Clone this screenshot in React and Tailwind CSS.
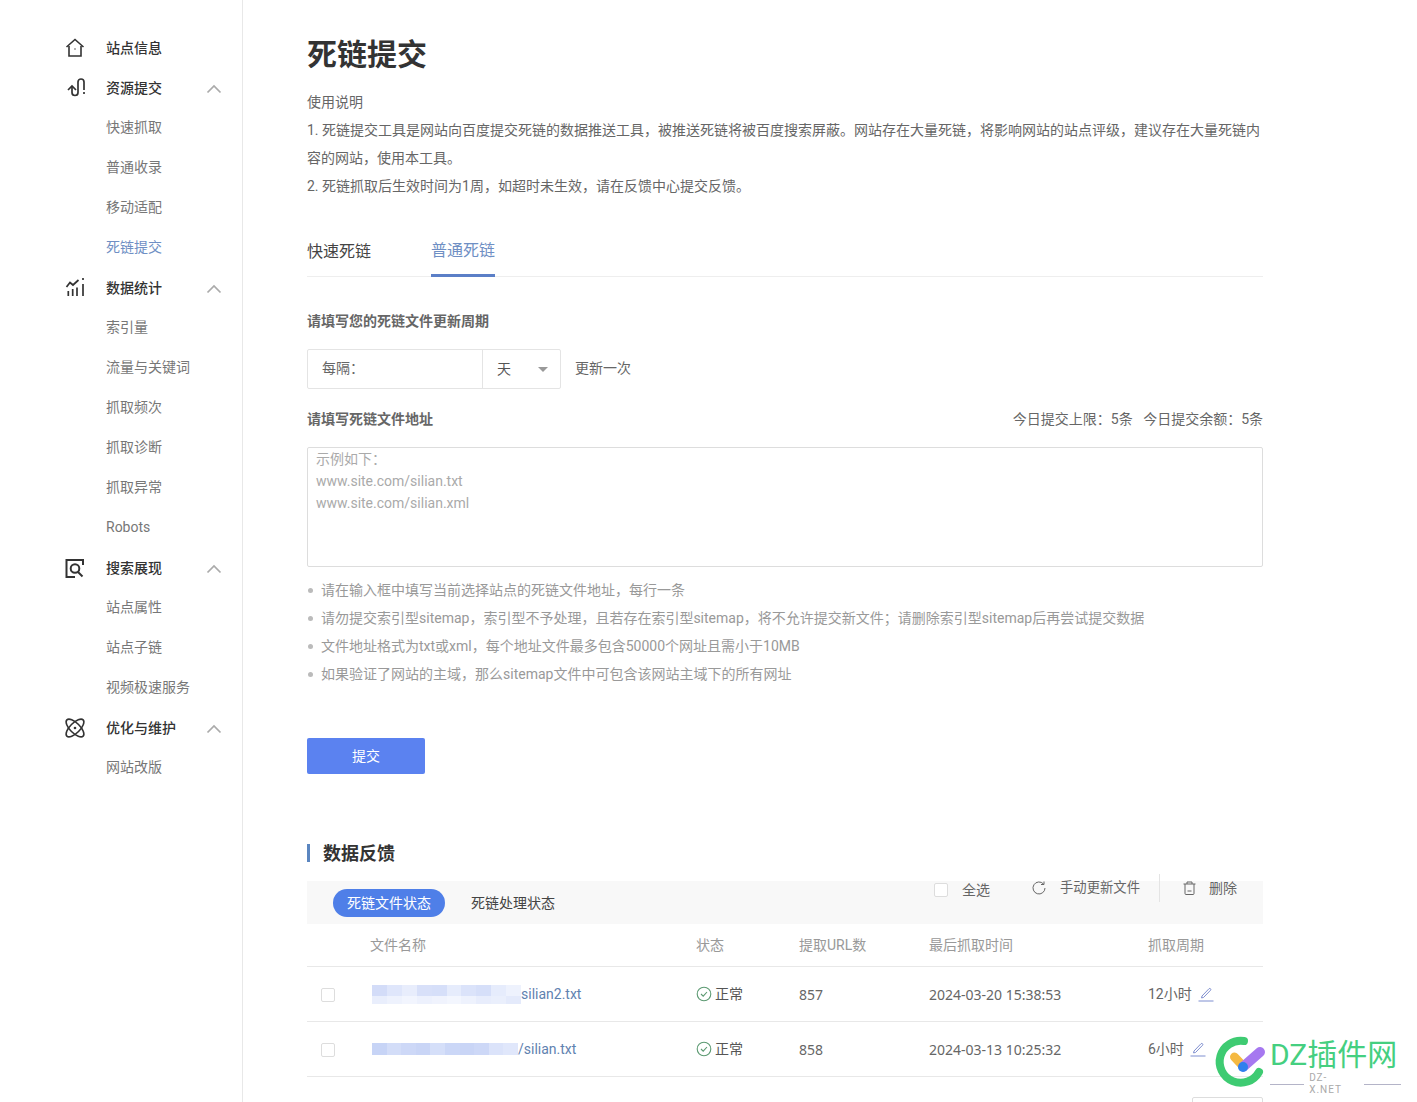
import React from 'react';

const HomeIcon = () => (
  <svg width="20" height="20" viewBox="0 0 20 20" fill="none" stroke="#333" strokeWidth="1.600">
    <path d="M1.500 9 10 1.500 18.500 9" />
    <path d="M4 8v10h12V8" />
    <path d="M9.500 11h1" />
  </svg>
);

const SubmitIcon = () => (
  <svg width="20" height="22" viewBox="0 0 20 22" fill="none" stroke="#333" strokeWidth="1.700">
    <path d="M3 13l4-4 4 4" />
    <path d="M7 9v6.500a3 3 0 0 0 6 0V5a3 3 0 0 1 6 0v8" />
    <path d="M19 15v2" />
  </svg>
);

const StatsIcon = () => (
  <svg width="20" height="20" viewBox="0 0 20 20" fill="none" stroke="#333" strokeWidth="1.700">
    <path d="M1.500 9 5 4.500 8 7l5.500-5" />
    <path d="M3.300 18v-5M7.700 18v-7M12 18V9.500M18 18V6" />
    <path d="M18 0v2" />
  </svg>
);

const SearchIcon = () => (
  <svg width="20" height="20" viewBox="0 0 20 20" fill="none" stroke="#333" strokeWidth="2">
    <path d="M18 7V2H1.500v17H10" />
    <circle cx="10" cy="10.500" r="4.300" />
    <path d="m13 14 4.500 4.500" />
  </svg>
);

const AtomIcon = () => (
  <svg width="20" height="20" viewBox="0 0 20 20" fill="none" stroke="#333" strokeWidth="1.600" className="overflow-visible">
    <ellipse cx="10" cy="10" rx="11.500" ry="5" transform="rotate(45 10 10)" />
    <ellipse cx="10" cy="10" rx="11.500" ry="5" transform="rotate(-45 10 10)" />
    <circle cx="10" cy="10" r="1.300" fill="#333" stroke="none" />
  </svg>
);

const Chevron = () => (
  <svg width="16" height="10" viewBox="0 0 16 10" fill="none" stroke="#aaa" strokeWidth="1.700" className="mt-[2px]">
    <path d="m1.500 8.500 6.500-6.500 6.500 6.500" />
  </svg>
);

const CheckCircle = () => (
  <svg width="16" height="16" viewBox="0 0 16 16" fill="none" stroke="#5c9a72" strokeWidth="1.100">
    <circle cx="8" cy="8" r="6.800" />
    <path d="m5 8 2.200 2.200L11 6" />
  </svg>
);

const Pencil = () => (
  <svg width="16" height="16" viewBox="0 0 16 16" fill="none" stroke="#7f8fd0" strokeWidth="1">
    <path d="M4 10 11 2.700c1-.9 2.500.5 1.600 1.500L5.500 11.500l-2 .4z" />
    <path d="M0.500 15h15" />
  </svg>
);

const menu = [
  { icon: <HomeIcon />, title: '站点信息', items: [] },
  { icon: <SubmitIcon />, title: '资源提交', arrow: true, items: ['快速抓取', '普通收录', '移动适配', '死链提交'] },
  { icon: <StatsIcon />, title: '数据统计', arrow: true, items: ['索引量', '流量与关键词', '抓取频次', '抓取诊断', '抓取异常', 'Robots'] },
  { icon: <SearchIcon />, title: '搜索展现', arrow: true, items: ['站点属性', '站点子链', '视频极速服务'] },
  { icon: <AtomIcon />, title: '优化与维护', arrow: true, items: ['网站改版'] },
];

const tips = [
  '请在输入框中填写当前选择站点的死链文件地址，每行一条',
  '请勿提交索引型sitemap，索引型不予处理，且若存在索引型sitemap，将不允许提交新文件；请删除索引型sitemap后再尝试提交数据',
  '文件地址格式为txt或xml，每个地址文件最多包含50000个网址且需小于10MB',
  '如果验证了网站的主域，那么sitemap文件中可包含该网站主域下的所有网址',
];

const rows = [
  {
    file: 'silian2.txt',
    boxW: 'w-[149px]',
    bands: [
      { h: 'h-[11px]', colors: ['bg-[#d3dcf8]', 'bg-[#dfe6fb]', 'bg-[#e8edfc]', 'bg-[#d8e0f9]', 'bg-[#d6dff9]', 'bg-[#e6ecfc]', 'bg-[#dbe3fa]', 'bg-[#d6dff9]', 'bg-[#e6ecfc]', 'bg-[#eef2fd]'] },
      { h: 'h-[8px]', colors: ['bg-[#e9eefc]', 'bg-[#eef2fd]', 'bg-[#f2f5fe]', 'bg-[#edf1fd]', 'bg-[#f0f3fd]', 'bg-[#f3f6fe]', 'bg-[#eef2fd]', 'bg-[#e8edfc]', 'bg-[#eaeffc]', 'bg-[#e4eafb]'] },
    ],
    count: '857',
    time: '2024-03-20 15:38:53',
    cycle: '12小时',
  },
  {
    file: '/silian.txt',
    boxW: 'w-[146px]',
    bands: [
      { h: 'h-[12px]', colors: ['bg-[#c7d4f6]', 'bg-[#d3ddf8]', 'bg-[#cdd8f7]', 'bg-[#c9d5f6]', 'bg-[#d5dff9]', 'bg-[#cbd7f7]', 'bg-[#c9d5f6]', 'bg-[#cdd8f7]', 'bg-[#dbe3fa]', 'bg-[#e0e7fb]'] },
    ],
    count: '858',
    time: '2024-03-13 10:25:32',
    cycle: '6小时',
  },
];

const Box = () => <span className="block w-[14px] h-[14px] rounded-[2px] border border-[#ddd] bg-white" />;

function Sidebar() {
  return (
    <div className="w-[243px] shrink-0 border-r border-[#e8e8e8] pt-[28px]">
      {menu.map((group) => (
        <div key={group.title}>
          <div className="h-[40px] flex items-center pl-[65px] pr-[20px]">
            <span className="w-[41px] shrink-0">{group.icon}</span>
            <span className="text-[14px] font-medium text-[#333]">{group.title}</span>
            {group.arrow && <span className="ml-auto"><Chevron /></span>}
          </div>
          {group.items.map((item) => (
            <div
              key={item}
              className={`h-[40px] flex items-center pb-[2px] pl-[106px] text-[14px] ${item === '死链提交' ? 'text-[#6f8fc4]' : 'text-[#777]'}`}
            >
              {item}
            </div>
          ))}
        </div>
      ))}
    </div>
  );
}

function FeedbackTable() {
  return (
    <div>
      <div className="flex items-center h-[26px] mt-[66px] text-[18px] font-bold text-[#333]">
        <span className="w-[3px] h-[18px] bg-[#5b86c0] mr-[13px]" />
        数据反馈
      </div>
      <div className="flex items-start h-[43px] mt-[15px] bg-[#f8f8f8] pl-[26px] pr-[26px] text-[14px]">
        <div className="mt-[8px] h-[28px] w-[112px] rounded-full bg-[#4f7fe8] text-white flex items-center justify-center">死链文件状态</div>
        <div className="mt-[8px] h-[28px] ml-[26px] flex items-center text-[#444]">死链处理状态</div>
        <div className="ml-auto -mt-[7px] h-[28px] flex items-center text-[#666]">
          <span className="mt-[4px] mr-[14px]"><Box /></span>
          <span className="mt-[4px] mr-[42px]">全选</span>
          <svg width="14" height="14" viewBox="0 0 14 14" fill="none" stroke="#666" strokeWidth="1" className="mr-[14px]">
            <path d="M11.500 3A6 6 0 1 0 13 7" />
            <path d="M12 .5V3.500H9" />
          </svg>
          <span className="mr-[19px] text-[13.330px]">手动更新文件</span>
          <span className="w-px h-[28px] bg-[#e4e4e4] mr-[23px]" />
          <svg width="13" height="14" viewBox="0 0 13 14" fill="none" stroke="#666" strokeWidth="1" className="mr-[13px]">
            <path d="M.500 3h12M4 3V1h5v2M2 3v9.500a1 1 0 0 0 1 1h7a1 1 0 0 0 1-1V3M4.500 10h4" />
          </svg>
          <span>删除</span>
        </div>
      </div>
      <div className="grid grid-cols-[63px_326px_103px_130px_219px_115px] items-center h-[43px] border-b border-[#e8e8e8] text-[14px] text-[#999]">
        <span />
        <span>文件名称</span>
        <span>状态</span>
        <span>提取URL数</span>
        <span>最后抓取时间</span>
        <span>抓取周期</span>
      </div>
      {rows.map((row) => (
        <div key={row.file} className="grid grid-cols-[63px_326px_103px_130px_219px_115px] items-center h-[55px] border-b border-[#e8e8e8] text-[14px] text-[#666]">
          <span className="pl-[14px] pt-[1px]"><Box /></span>
          <span className="flex items-center pl-[2px] text-[#5f82b0]">
            <span className={`block ${row.boxW}`}>
              {row.bands.map((band) => (
                <span key={band.h} className={`flex ${band.h}`}>
                  {band.colors.map((color, i) => (
                    <span key={i} className={`flex-1 ${color}`} />
                  ))}
                </span>
              ))}
            </span>
            {row.file}
          </span>
          <span className="flex items-center gap-[3px] text-[#555]"><CheckCircle />正常</span>
          <span className="font-['Noto_Sans','Noto_Sans_CJK_SC',sans-serif]">{row.count}</span>
          <span className="font-['Noto_Sans','Noto_Sans_CJK_SC',sans-serif]">{row.time}</span>
          <span className="flex items-center gap-[6px]">{row.cycle}<Pencil /></span>
        </div>
      ))}
      <div className="mt-[20px] ml-auto w-[71px] h-[30px] border border-[#ddd] rounded-[2px]" />
    </div>
  );
}

function Watermark() {
  return (
    <div className="absolute left-[1217px] top-[1036px] w-[184px] h-[52px] flex">
      <svg width="48" height="52" viewBox="0 0 48 52" fill="none" className="shrink-0 overflow-visible">
        <path d="M27 5A21 21 0 1 0 42 36" stroke="#3ecb72" strokeWidth="8" strokeLinecap="round" />
        <path d="M17.500 21l8 8.500" stroke="#f5b942" strokeWidth="9" strokeLinecap="round" />
        <path d="M26.500 30.500 43 16" stroke="#a678f0" strokeWidth="10" strokeLinecap="round" />
        <circle cx="26" cy="31" r="5" fill="#2f80ed" />
      </svg>
      <div className="ml-[5px] flex flex-col">
        <span className="text-[30px] leading-[36px] mt-[1px] text-[#45cf80] whitespace-nowrap">DZ插件网</span>
        <span className="flex items-center gap-[5px] text-[10px] leading-[12px] mt-[-1px] tracking-[1px] text-[#aaa]">
          <span className="w-[35px] h-px bg-[#b4b4c8]" />
          DZ-X.NET
          <span className="w-[38px] h-px bg-[#b4b4c8]" />
        </span>
      </div>
    </div>
  );
}

export default function App() {
  return (
    <div className="relative h-screen overflow-hidden flex bg-white font-['Roboto','Noto_Sans_CJK_SC',sans-serif]">
      <Sidebar />
      <div className="ml-[64px] w-[956px] shrink-0">
        <h1 className="mt-[35px] h-[40px] leading-[40px] text-[30px] font-bold text-[#333]">死链提交</h1>
        <div className="mt-[13px] text-[14px] leading-[28px] text-[#666]">
          <p>使用说明</p>
          <p>1. 死链提交工具是网站向百度提交死链的数据推送工具，被推送死链将被百度搜索屏蔽。网站存在大量死链，将影响网站的站点评级，建议存在大量死链内容的网站，使用本工具。</p>
          <p>2. 死链抓取后生效时间为1周，如超时未生效，请在反馈中心提交反馈。</p>
        </div>
        <div className="mt-[27px] h-[50px] flex gap-[60px] border-b border-[#eee] text-[16px]">
          <div className="h-[50px] flex items-center text-[#444]">快速死链</div>
          <div className="h-[50px] flex items-center border-b-[3px] border-[#5b7fc7] text-[#6f8fc4]">普通死链</div>
        </div>
        <div className="mt-[33px] h-[22px] leading-[22px] text-[14px] font-bold text-[#666]">请填写您的死链文件更新周期</div>
        <div className="mt-[17px] flex items-center text-[14px] text-[#666]">
          <div className="w-[254px] h-[40px] flex border border-[#e4e4e4] rounded-[2px]">
            <div className="w-[175px] flex items-center pl-[14px] pb-[2px] border-r border-[#e4e4e4]">每隔：</div>
            <div className="flex-1 flex items-center pl-[14px] pr-[12px] justify-between text-[#555]">
              天
              <span className="w-0 h-0 border-x-[5px] border-x-transparent border-t-[5px] border-t-[#999]" />
            </div>
          </div>
          <span className="ml-[14px] pb-[2px]">更新一次</span>
        </div>
        <div className="mt-[19px] h-[22px] leading-[22px] flex justify-between text-[14px] text-[#666]">
          <span className="font-bold">请填写死链文件地址</span>
          <span>今日提交上限：5条&nbsp;&nbsp;&nbsp;今日提交余额：5条</span>
        </div>
        <div className="mt-[17px] h-[120px] border border-[#ddd] rounded-[2px] pl-[8px] text-[14px] leading-[22px] text-[#aaa]">
          <div>示例如下：</div>
          <div>www.site.com/silian.txt</div>
          <div>www.site.com/silian.xml</div>
        </div>
        <ul className="mt-[9px] text-[14px] leading-[28px] text-[#999]">
          {tips.map((tip) => (
            <li key={tip} className="flex items-center">
              <span className="w-[5px] h-[5px] rounded-full bg-[#bbb] ml-[1px] mr-[8px] shrink-0" />
              <span>{tip}</span>
            </li>
          ))}
        </ul>
        <button className="mt-[50px] block w-[118px] h-[36px] rounded-[2px] bg-[#5b82f0] text-white text-[14px]">提交</button>
        <FeedbackTable />
      </div>
      <Watermark />
    </div>
  );
}
